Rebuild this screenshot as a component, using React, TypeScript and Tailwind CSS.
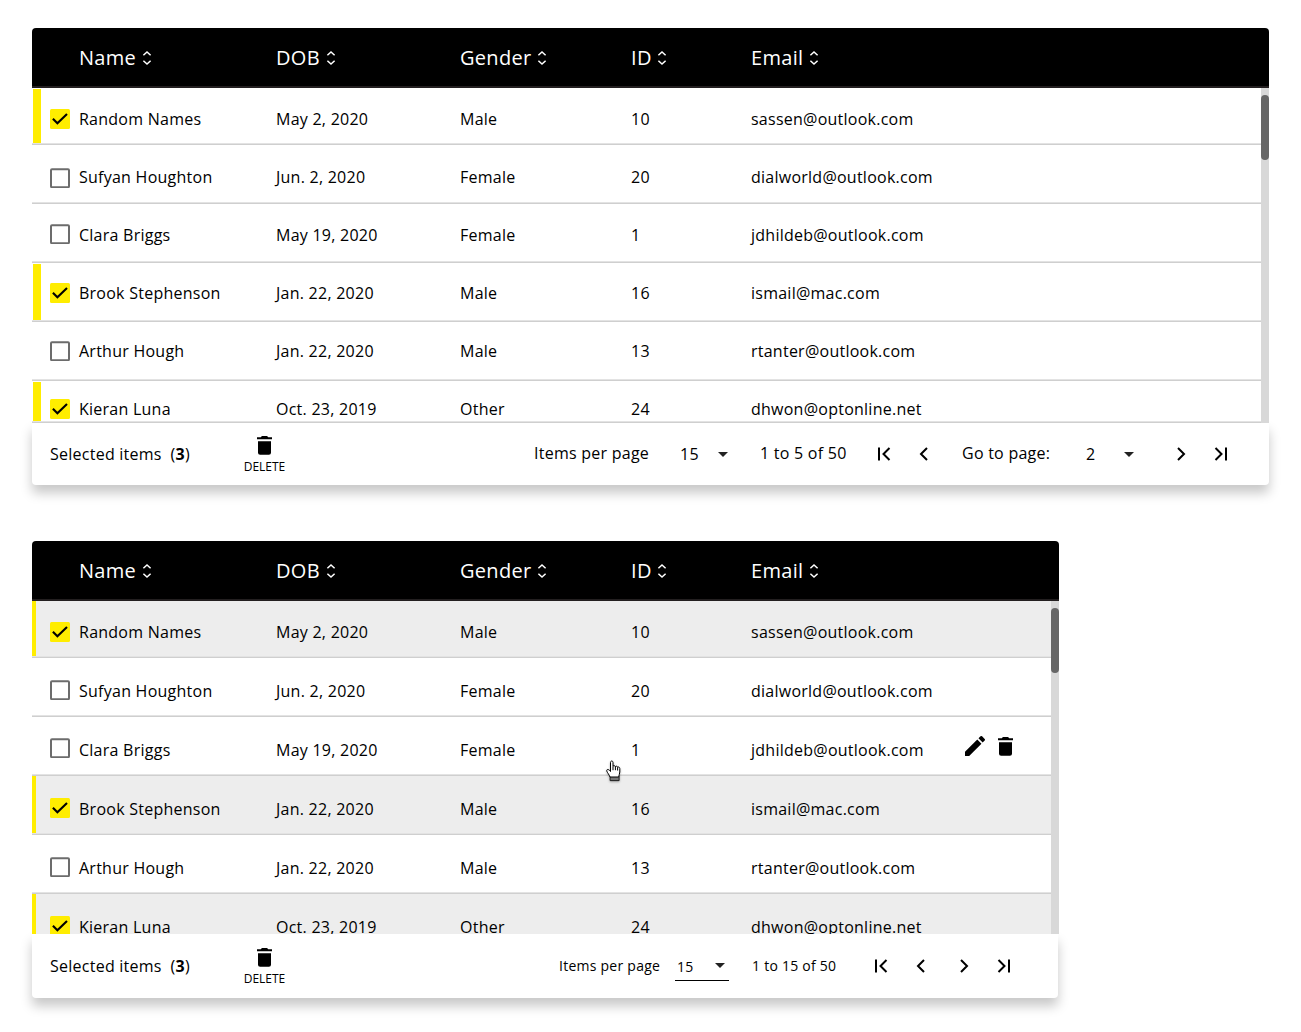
import React from "react";

const people = [
  ["Random Names", "May 2, 2020", "Male", "10", "sassen@outlook.com"],
  ["Sufyan Houghton", "Jun. 2, 2020", "Female", "20", "dialworld@outlook.com"],
  ["Clara Briggs", "May 19, 2020", "Female", "1", "jdhildeb@outlook.com"],
  ["Brook Stephenson", "Jan. 22, 2020", "Male", "16", "ismail@mac.com"],
  ["Arthur Hough", "Jan. 22, 2020", "Male", "13", "rtanter@outlook.com"],
  ["Kieran Luna", "Oct. 23, 2019", "Other", "24", "dhwon@optonline.net"],
];
const selected = [true, false, false, true, false, true];

const cols = "grid grid-cols-[197px_184px_171px_120px_auto]";

// Vertical padding of the checkbox and of the text, row by row.
const wideRows = [
  { row: "h-[57px]", box: "pt-[21px]", text: "pt-[19px]" },
  { row: "h-[59px]", box: "pt-[23px]", text: "pt-[20px]" },
  { row: "h-[59px]", box: "pt-[20px]", text: "pt-[19px]" },
  { row: "h-[59px]", box: "pt-[20px]", text: "pt-[18px]" },
  { row: "h-[59px]", box: "pt-[19px]", text: "pt-[17px]" },
  { row: "h-[42px]", box: "pt-[18px]", text: "pt-[16px]" },
];
const compactRows = [
  { row: "h-[57px]", box: "pt-[21px]", text: "pt-[19px]" },
  { row: "h-[59px]", box: "pt-[22px]", text: "pt-[21px]" },
  { row: "h-[59px]", box: "pt-[21px]", text: "pt-[21px]" },
  { row: "h-[59px]", box: "pt-[22px]", text: "pt-[21px]" },
  { row: "h-[59px]", box: "pt-[22px]", text: "pt-[21px]" },
  { row: "h-[40px]", box: "pt-[22px]", text: "pt-[21px]" },
];

const SortIcon = () => (
  <svg className="-mt-px h-4 w-[10px]" viewBox="0 0 10 16" fill="none" stroke="#fff" strokeWidth="1.5">
    <path d="M1.4 5.2 5 1.9l3.6 3.3M1.4 10.8 5 14.1l3.6-3.3" />
  </svg>
);

const Checkbox = ({ on }: { on: boolean }) => (
  <svg className="block size-5" viewBox="0 0 20 20">
    {on ? (
      <>
        <rect width="20" height="20" rx="1.5" fill="#ffed00" />
        <path d="M2.9 9.8 7.4 14.3 17 5" fill="none" stroke="#000" strokeWidth="2.1" />
      </>
    ) : (
      <rect x="1" y="1.3" width="18" height="18" rx="1" fill="#fff" stroke="#6c6c6c" strokeWidth="2" />
    )}
  </svg>
);

const Trash = () => (
  <svg className="block h-[19px] w-[15px]" viewBox="0 0 15 19">
    <path d="M1 5.3h13v11.4a2.1 2.1 0 0 1-2.1 2.1H3.1A2.1 2.1 0 0 1 1 16.7zM15 1.2v2H0v-2h3.8L4.9.1h5.2l1.1 1.1z" />
  </svg>
);

const Pencil = () => (
  <svg className="-mt-px block size-5" viewBox="3 3 18 18">
    <path d="M3 17.25V21h3.75L17.81 9.94l-3.75-3.75L3 17.25zM20.71 7.04a1 1 0 0 0 0-1.41l-2.34-2.34a1 1 0 0 0-1.41 0l-1.83 1.83 3.75 3.75 1.83-1.83z" />
  </svg>
);

const Hand = () => (
  <svg className="block h-[22px] w-4 drop-shadow-[0_1px_1px_rgba(0,0,0,0.3)]" viewBox="0 0 16 22">
    <path d="M4.1 16.4h9v4.2h-9z" fill="#777" stroke="#222" />
    <path d="M4 17C3 14.3 1.4 12.8.8 11.1c-.3-1.2.5-1.9 1.4-1.6 1 .3 1.7 1.4 2.3 2V2.6c0-2.1 2.5-2.1 2.5 0v3.7c.5-1 2.2-.8 2.4.4.6-.9 2-.6 2.2.5.8-.7 2.2 0 2.2 1.4v3.4c0 1.6-.9 3-1.1 5z" fill="#fff" stroke="#000" />
    <path d="M7 6.3v3.9M9.4 6.7v3.5M11.6 7.3v3.2" stroke="#000" fill="none" />
  </svg>
);

const chevron = "-mt-px block h-[14px] w-[14px]";
const First = () => (
  <svg className={chevron} viewBox="0 0 14 14" fill="none" stroke="#000" strokeWidth="2">
    <path d="M2 .5v13M12.5 1 6.5 7l6 6" />
  </svg>
);
const Prev = () => (
  <svg className={chevron} viewBox="0 0 14 14" fill="none" stroke="#000" strokeWidth="2">
    <path d="M10 1 4 7l6 6" />
  </svg>
);
const Next = () => (
  <svg className={chevron} viewBox="0 0 14 14" fill="none" stroke="#000" strokeWidth="2">
    <path d="m4 1 6 6-6 6" />
  </svg>
);
const Last = () => (
  <svg className={chevron} viewBox="0 0 14 14" fill="none" stroke="#000" strokeWidth="2">
    <path d="M12 .5v13M1.5 1l6 6-6 6" />
  </svg>
);
const Caret = () => (
  <svg className="block h-[5px] w-[10px]" viewBox="0 0 10 5">
    <path d="M0 0h10L5 5z" fill="#222" />
  </svg>
);

const Header = () => (
  <div className={`${cols} h-[60px] rounded-t-[4px] border-b-2 border-[#231f20] bg-black pl-[47px] text-white`}>
    {["Name", "DOB", "Gender", "ID", "Email"].map((label) => (
      <div
        key={label}
        className={`flex items-center pt-[2px] text-[20px] leading-7 tracking-[0.3px] ${label === "ID" ? "gap-[5px]" : "gap-[6px]"}`}
      >
        {label}
        <SortIcon />
      </div>
    ))}
  </div>
);

const Body = ({ compact }: { compact: boolean }) => (
  <div className="flex">
    <div className={compact ? "w-[1019px]" : "w-[1229px]"}>
      {people.map((cells, i) => {
        const m = (compact ? compactRows : wideRows)[i];
        const on = selected[i];
        const last = i === people.length - 1;
        return (
          <div key={cells[0]} className={`flex flex-col overflow-hidden ${m.row} ${compact && on ? "bg-[#ededed]" : "bg-white"}`}>
            <div className="flex min-h-0 grow">
              <div className={`shrink-0 ${compact ? "mr-[0.5px] w-[3.5px]" : "mt-px mr-[0.4px] ml-[0.6px] w-2"} ${on ? "bg-[#ffed00]" : ""}`} />
              <div className={`shrink-0 ${compact ? "w-[43px] pl-[14px]" : "w-[38px] pl-[9px]"} ${m.box}`}>
                <Checkbox on={on} />
              </div>
              <div className={`${cols} grow text-[16px] leading-6 font-normal tracking-[0.25px] ${m.text}`}>
                {cells.map((c, j) => (
                  <div key={j}>{c}</div>
                ))}
              </div>
              {compact && i === 2 && (
                <div className="flex shrink-0 gap-[13px] pt-5 pr-[38px]">
                  <Pencil />
                  <Trash />
                </div>
              )}
            </div>
            {!(compact && last) && <div className="h-[2px] shrink-0 border-b border-[#cfcfcf] bg-[#e3e3e3]" />}
          </div>
        );
      })}
    </div>
    <div className="w-2 bg-[#d8d8d8] pt-[7px]">
      <div className="h-[65px] rounded-full bg-[#666]" />
    </div>
  </div>
);

const Selection = () => (
  <>
    <div className="w-[194px] text-[16px]">
      Selected items&nbsp; (<span className="font-bold">3</span>)
    </div>
    <div className="flex w-[41px] flex-col items-center pt-[2px]">
      <Trash />
      <span className="mt-1 text-[12px] leading-4 font-normal tracking-normal">DELETE</span>
    </div>
  </>
);

const footer = "flex items-center rounded-b-[4px] bg-white pl-[18px] font-normal tracking-[0.25px] shadow-[0_8px_12px_rgba(0,0,0,0.22)]";

export default function App() {
  return (
    <div className="flex h-[1032px] w-[1301px] flex-col overflow-hidden bg-white pt-7 pl-8 font-['Open_Sans','Noto_Sans',sans-serif] whitespace-nowrap text-black">
      <section className="w-[1237px]">
        <Header />
        <Body compact={false} />
        <div className={`${footer} h-[62px]`}>
          <Selection />
          <div className="-mt-[2px] ml-[249px] w-[146px]">Items per page</div>
          <div className="w-[38px]">15</div>
          <Caret />
          <div className="-mt-[2px] ml-[32px] w-[117px]">1 to 5 of 50</div>
          <First />
          <div className="w-[26px]" />
          <Prev />
          <div className="-mt-[2px] ml-[31px] w-[124px]">Go to page:</div>
          <div className="w-[38px]">2</div>
          <Caret />
          <div className="w-[40px]" />
          <Next />
          <div className="w-[26px]" />
          <Last />
        </div>
      </section>
      <section className="relative mt-14 w-[1027px]">
        <Header />
        <Body compact />
        <div className={`${footer} h-[64px] w-[1026px]`}>
          <Selection />
          <div className="-mt-px ml-[274px] w-[116px] text-[14px]">Items per page</div>
          <div className="flex h-[30px] w-[54px] items-center border-b border-black pl-[2px] text-[14px]">
            <span className="w-[38px] pt-[2px]">15</span>
            <Caret />
          </div>
          <div className="-mt-px ml-[23px] w-[122px] text-[14px]">1 to 15 of 50</div>
          <First />
          <div className="w-[26px]" />
          <Prev />
          <div className="w-[29px]" />
          <Next />
          <div className="w-[26px]" />
          <Last />
        </div>
        <div className="absolute top-[219px] left-[574px]">
          <Hand />
        </div>
      </section>
    </div>
  );
}
